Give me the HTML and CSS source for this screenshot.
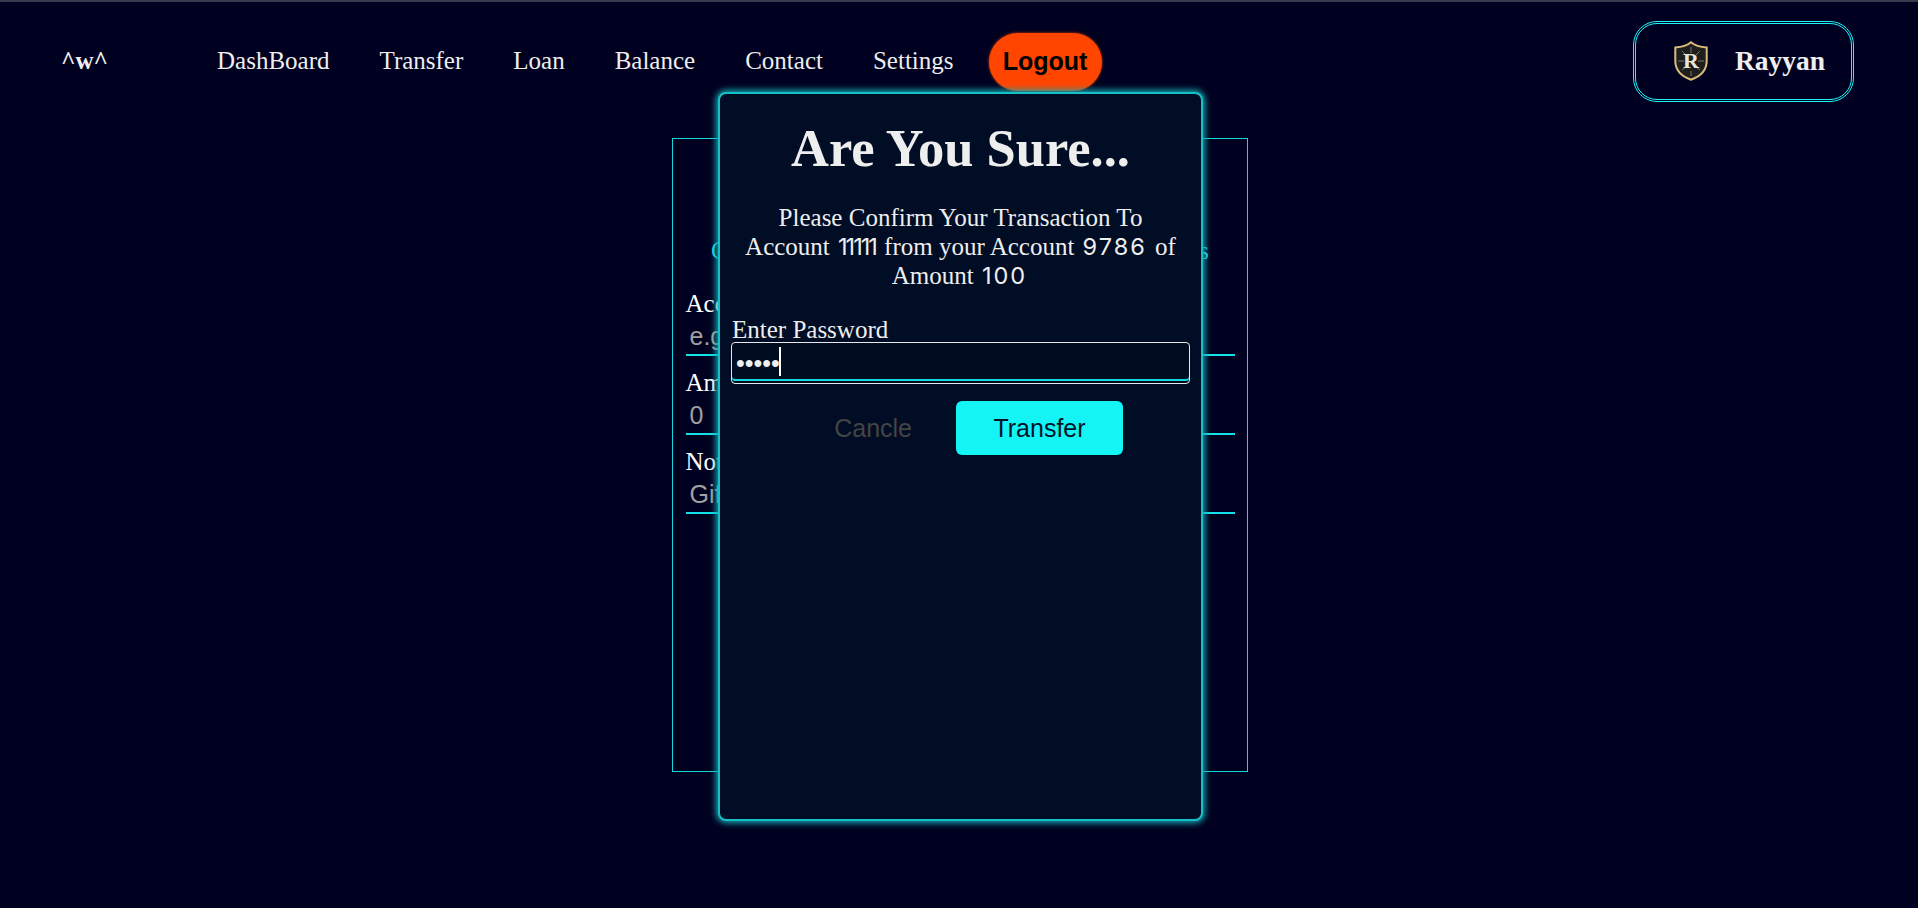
FILE: index.html
```html
<!DOCTYPE html>
<html lang="en">
<head>
    <meta charset="UTF-8">
    <meta name="viewport" content="width=device-width, initial-scale=1.0">
    <title>Transfer</title>
    <link rel="stylesheet" href="styles.css">
</head>
<body>
    <header class="navbar">
        <div class="brand">^w^</div>
        <nav class="menu">
            <a href="#">DashBoard</a>
            <a href="#">Transfer</a>
            <a href="#">Loan</a>
            <a href="#">Balance</a>
            <a href="#">Contact</a>
            <a href="#">Settings</a>
            <button class="logout">Logout</button>
        </nav>
        <div class="profile">
            <svg class="shield" viewBox="0 0 34 40" aria-hidden="true">
                <path d="M17 1.200C13 4.600 7.500 6 1.300 6.400V20C1.300 29 8 35.500 17 38.800C26 35.500 32.700 29 32.700 20V6.400C26.500 6 21 4.600 17 1.200Z" fill="#1e1e1c" stroke="#dcbc7c" stroke-width="2"/>
                <path d="M17 6V12M17 30V35M4 20H10M24 20H30M8 10L12 14M26 10L22 14M8 29L12 26M26 29L22 26" stroke="#77746a" stroke-width="1" fill="none"/>
                <text x="17" y="27" text-anchor="middle" class="shield-letter">R</text>
            </svg>
            <span class="profile-name">Rayyan</span>
        </div>
    </header>

    <main class="page">
        <form class="card">
            <h2 class="card-title">Transfer</h2>
            <p class="card-sub">Complete your transfer to any other bank accounts</p>
            <label class="field">
                <span>Account</span>
                <input type="text" placeholder="e.g. 12345">
            </label>
            <label class="field">
                <span>Amount</span>
                <input type="text" placeholder="0">
            </label>
            <label class="field">
                <span>Note</span>
                <input type="text" placeholder="Gift">
            </label>
        </form>
    </main>

    <div class="modal">
        <h1 class="modal-title">Are You Sure...</h1>
        <p class="modal-text">
            Please Confirm Your Transaction To Account <span class="num num-ones">11111</span> from your Account <span class="num">9786</span> of Amount <span class="num">100</span>
        </p>
        <label class="pass-label" for="pass">Enter Password</label>
        <div class="pass-box">
            <input id="pass" class="pass-input" type="password" value="12345">
            <span class="caret"></span>
        </div>
        <div class="modal-actions">
            <button class="btn-cancel">Cancle</button>
            <button class="btn-transfer">Transfer</button>
        </div>
    </div>
</body>
</html>
```

FILE: styles.css
```css
* {
    box-sizing: border-box;
}

body {
    margin: 0;
    height: 908px;
    overflow: hidden;
    background-color: #000020;
    border-top: 2px solid #363a4c;
    color: #eeeeee;
    font-family: "Liberation Serif", serif;
}

.navbar {
    display: flex;
    align-items: center;
    height: 118px;
    padding: 0 64px 0 61px;
}

.brand {
    width: 156px;
    font-size: 25px;
    font-weight: bold;
}

.menu {
    display: flex;
    align-items: center;
    gap: 50px;
    flex: 1;
}

.menu a {
    color: #eeeeee;
    text-decoration: none;
    font-size: 25px;
}

.logout {
    margin: 1px 0 0 -15px;
    width: 113px;
    height: 58px;
    border: none;
    border-radius: 29px;
    background: #ff4500;
    box-shadow: 0 0 3px #d84000;
    color: #000000;
    font-family: "Liberation Sans", sans-serif;
    font-size: 25px;
    font-weight: bold;
}

.profile {
    display: flex;
    align-items: center;
    gap: 27px;
    width: 221px;
    height: 81px;
    padding-left: 38px;
    border: 3px double #1cf4f8;
    border-radius: 24px;
}

.shield {
    width: 34px;
    height: 40px;
}

.shield-letter {
    font-family: "Liberation Serif", serif;
    font-size: 22px;
    font-weight: bold;
    fill: #e8e6dc;
}

.profile-name {
    font-size: 27.500px;
    font-weight: bold;
}

.page {
    display: flex;
    justify-content: center;
    padding-top: 18px;
}

.card {
    width: 576px;
    height: 634px;
    margin-left: 1px;
    padding: 14px 12px 14px 13px;
    border: 1px solid #14d8de;
}

.card-title {
    margin: 0;
    height: 66px;
    font-size: 40px;
    text-align: center;
}

.card-sub {
    margin: 19px -12px 25px;
    color: #22d8e0;
    font-size: 24.600px;
    line-height: 26px;
    text-align: center;
}

.field {
    display: block;
    margin-bottom: 12px;
    font-size: 25px;
    line-height: 30px;
}

.field span {
    display: block;
    color: #ffffff;
}

.field input {
    display: block;
    width: 100%;
    height: 37px;
    padding: 0 4px;
    background: transparent;
    border: none;
    border-bottom: 2px solid #14e0e8;
    color: #eeeeee;
    font-family: "Liberation Sans", sans-serif;
    font-size: 25px;
}

.field input::placeholder {
    color: #a0a0a0;
    opacity: 1;
}

.modal {
    position: absolute;
    top: 92px;
    left: 718px;
    width: 485px;
    height: 729px;
    padding: 0 12px;
    background-color: #010d24;
    border: 2px solid #16c0c8;
    border-radius: 8px;
    box-shadow: 0 0 6px 2px #14a8b0;
}

.modal-title {
    margin: 22px 0 0;
    font-size: 52.500px;
    line-height: 64px;
    text-align: center;
}

.modal-text {
    margin: 23px 6px 0;
    font-size: 25px;
    line-height: 29px;
    text-align: center;
}

.num {
    margin: 0 2px;
    font-family: Inter, sans-serif;
    font-size: 23.500px;
    line-height: 1;
    letter-spacing: 2px;
}

.num-ones {
    letter-spacing: -2px;
}

.pass-label {
    display: block;
    margin-top: 27px;
    font-size: 25px;
    line-height: 25px;
}

.pass-box {
    position: relative;
    width: 459px;
    margin-left: -1px;
}

.pass-input {
    display: block;
    width: 100%;
    height: 42px;
    padding: 0 4px;
    background: #000c20;
    border: 1px solid #e8e8e8;
    border-radius: 4px;
    box-shadow: inset 0 -2px 0 #000c20, inset 0 -4px 0 #14d8de;
    color: #eeeeee;
    font-size: 25px;
    outline: none;
}

.caret {
    position: absolute;
    top: 5px;
    left: 48px;
    width: 2px;
    height: 29px;
    background: #ffffff;
}

.modal-actions {
    display: flex;
    justify-content: flex-end;
    align-items: center;
    gap: 44px;
    margin-top: 17px;
    padding-right: 66px;
}

.btn-cancel,
.btn-transfer {
    border: none;
    font-family: "Liberation Sans", sans-serif;
    font-size: 25px;
}

.btn-cancel {
    padding: 0;
    background: transparent;
    color: #444444;
}

.btn-transfer {
    width: 167px;
    height: 54px;
    background: #14f4f4;
    border-radius: 6px;
    color: #02142a;
}
```
